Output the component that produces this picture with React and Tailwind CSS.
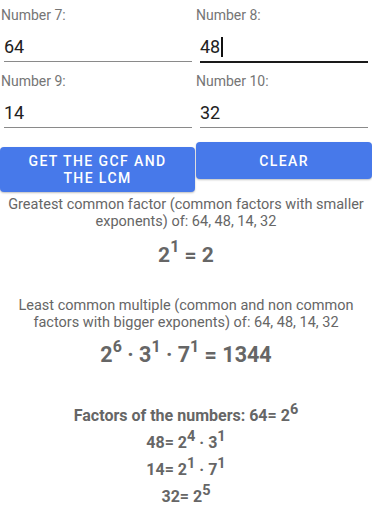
import React from "react";

const font = { fontFamily: "Roboto, 'Liberation Sans', sans-serif" };

function Field({ label, value, focused, first }) {
  return (
    <div className="flex flex-col pt-[7px]">
      <div className="pl-[1px] text-[14px] leading-[16px] text-[#757575] h-[16px]">{label}</div>
      <div
        className={
          "mt-[12px] h-[24px] text-[18px] leading-[24px] text-[#212121] flex items-center " +
          (first ? "ml-[4px] mr-[3px]" : "ml-[5px] mr-[4px]")
        }
      >
        <span>{value}</span>
        {focused && <span className="inline-block w-[2px] h-[20px] bg-[#111] ml-[1px]" />}
      </div>
      <div
        className={
          (first ? "ml-[4px] mr-[3px]" : "ml-[5px] mr-[4px]") +
          (focused ? " mt-[2px] h-[2px] bg-[#1a1a1a] mb-[3px]" : " mt-[2px] h-[1px] bg-[#8a8a8a] mb-[4px]")
        }
      />
    </div>
  );
}

function Sup({ children, cls }) {
  return <span className={"relative " + cls}>{children}</span>;
}

export default function App() {
  return (
    <div className="w-[372px] h-[512px] bg-white overflow-hidden" style={font}>
      <div className="grid grid-cols-[195px_1fr]">
        <Field label="Number 7:" value="64" first />
        <Field label="Number 8:" value="48" focused />
        <Field label="Number 9:" value="14" first />
        <Field label="Number 10:" value="32" />
      </div>

      <div className="flex items-start">
        <button className="w-[195px] mt-[15px] pt-[6px] pb-[5px] rounded-[4px] bg-[#4779ea] text-white text-[14px] leading-[17px] font-medium tracking-[0.1em] uppercase shadow-[0_1px_2px_rgba(0,0,0,0.25)]">
          Get the GCF and
          <br />
          the LCM
        </button>
        <button className="flex-1 ml-[1px] mt-[10px] h-[37px] pt-[11px] pb-[9px] rounded-[4px] bg-[#4779ea] text-white text-[14px] leading-[17px] font-medium tracking-[0.1em] uppercase shadow-[0_1px_2px_rgba(0,0,0,0.25)]">
          Clear
        </button>
      </div>

      <div className="mt-[4px] text-center text-[14.5px] leading-[17px] text-[#666666]">
        Greatest common factor (common factors with smaller
        <br />
        exponents) of: 64, 48, 14, 32
      </div>

      <div className="mt-[11px] text-center text-[21px] leading-[28px] font-bold text-[#666666]">
        2<Sup cls="-top-[10px] text-[16px]">1</Sup> = 2
      </div>

      <div className="mt-[26px] text-center text-[14.5px] leading-[17px] text-[#666666]">
        Least common multiple (common and non common
        <br />
        factors with bigger exponents) of: 64, 48, 14, 32
      </div>

      <div className="mt-[10px] text-center text-[21.5px] leading-[28px] font-bold text-[#666666]">
        2<Sup cls="-top-[10px] text-[16px]">6</Sup> · 3<Sup cls="-top-[10px] text-[16px]">1</Sup> · 7
        <Sup cls="-top-[10px] text-[16px]">1</Sup> = 1344
      </div>

      <div className="mt-[32px] text-center text-[16px] leading-[26px] font-bold text-[#666666]">
        <div>
          Factors of the numbers: 64= 2<Sup cls="-top-[7px] text-[14.5px]">6</Sup>
        </div>
        <div>
          48= 2<Sup cls="-top-[7px] text-[14.5px]">4</Sup> · 3<Sup cls="-top-[7px] text-[14.5px]">1</Sup>
        </div>
        <div>
          14= 2<Sup cls="-top-[7px] text-[14.5px]">1</Sup> · 7<Sup cls="-top-[7px] text-[14.5px]">1</Sup>
        </div>
        <div>
          32= 2<Sup cls="-top-[7px] text-[14.5px]">5</Sup>
        </div>
      </div>
    </div>
  );
}
